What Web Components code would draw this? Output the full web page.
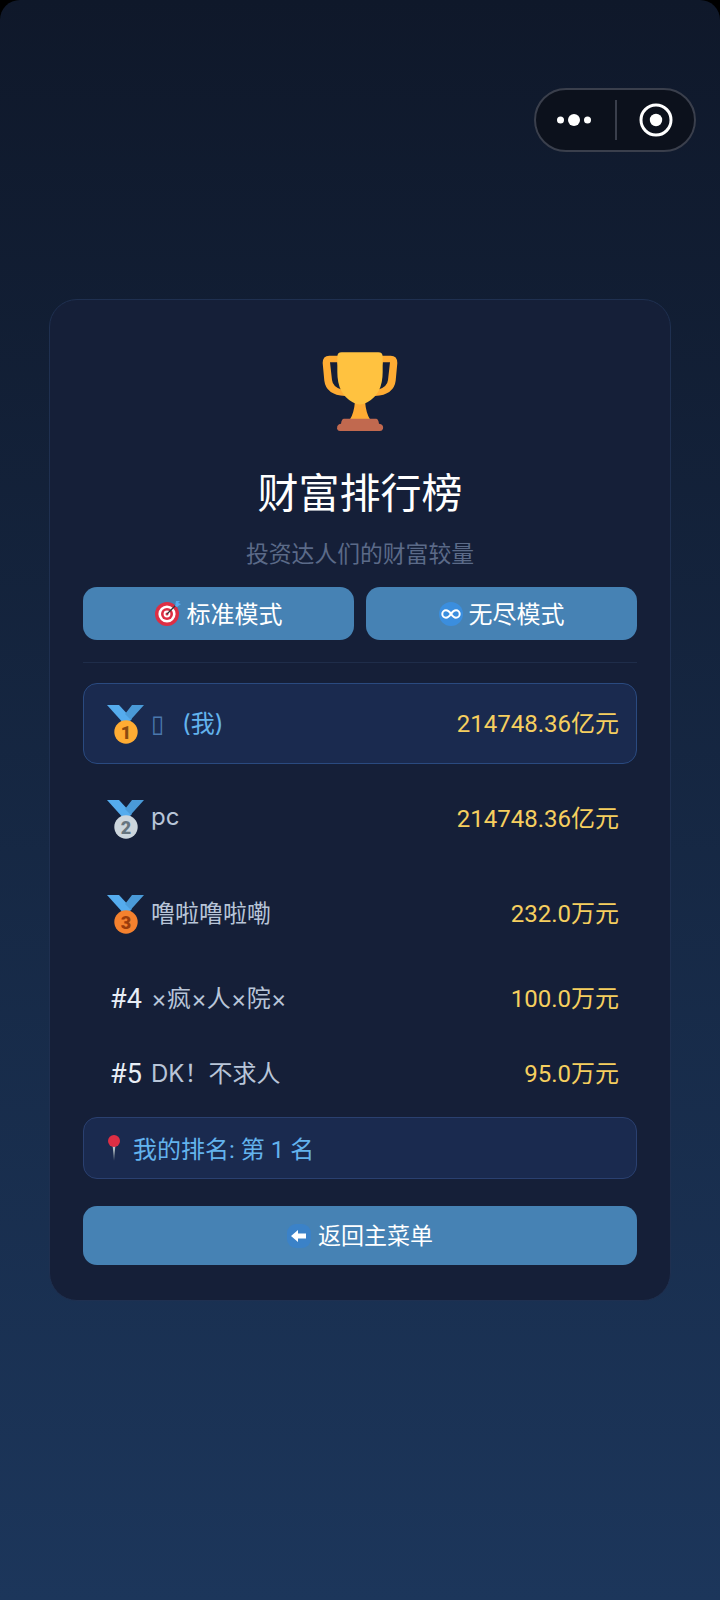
<!DOCTYPE html>
<html lang="zh">
<head>
<meta charset="utf-8">
<title>财富排行榜</title>
<style>
    html, body { margin: 0; padding: 0; background: #000; }
    body { font-family: Roboto, "Noto Sans CJK SC", sans-serif; }
</style>
</head>
<body>

<rank-page>
    <capsule-menu slot="top"></capsule-menu>
    <rank-card title-text="财富排行榜" sub-text="投资达人们的财富较量">
        <mode-button slot="modes" icon="target">标准模式</mode-button>
        <mode-button slot="modes" icon="infinity">无尽模式</mode-button>

        <rank-row slot="rows" mine rank="1" name="▯" tag="(我)" amount="214748.36亿元"></rank-row>
        <rank-row slot="rows" rank="2" name="pc" amount="214748.36亿元"></rank-row>
        <rank-row slot="rows" rank="3" name="噜啦噜啦嘞" amount="232.0万元"></rank-row>
        <rank-row slot="rows" rank="4" name="×疯×人×院×" amount="100.0万元"></rank-row>
        <rank-row slot="rows" rank="5" name="DK！不求人" amount="95.0万元"></rank-row>

        <my-rank slot="mine">我的排名: 第 1 名</my-rank>
        <mode-button slot="back" wide icon="back">返回主菜单</mode-button>
    </rank-card>
</rank-page>

<script>
// emoji are drawn by hand, the sandbox has no emoji font
const ICONS = {
    trophy: `<svg width="80" height="84" viewBox="120 55 240 252">
        <path fill-rule="evenodd" d="M172 75H148Q128 75 128 97L133 150Q138 192 195 196H285Q342 192 347 150L352 97Q352 75 332 75H308Z
            M150 95H172L188 178Q158 170 156 148Z M330 95H308L292 178Q322 170 324 148Z" fill="#ffac33"/>
        <path d="M225 212H255Q258 248 270 266H210Q222 248 225 212Z" fill="#ffac33"/>
        <path d="M172 78Q172 65 185 65H295Q308 65 308 78V125Q308 190 262 215Q240 228 218 215Q172 190 172 125Z" fill="#ffc240"/>
        <path d="M192 264H288Q295 264 297 279L303 281Q311 285 309 294Q307 301 300 301H180Q173 301 171 294Q170 285 177 281L183 279Q185 264 192 264Z" fill="#c1694f"/>
    </svg>`,
    target: `<svg width="26" height="26" viewBox="0 0 26 26">
        <circle cx="12" cy="13" r="12" fill="#dd2e44"/>
        <circle cx="12" cy="13" r="8.6" fill="#fff"/>
        <circle cx="12" cy="13" r="6" fill="#dd2e44"/>
        <circle cx="12" cy="13" r="3.4" fill="#fff"/>
        <circle cx="12" cy="13" r="1.5" fill="#dd2e44"/>
        <path d="M12 13L22 3" stroke="#31373d" stroke-width="1.2"/>
        <path d="M20 5L21 0L25 0L23 2L26 3L22 6Z" fill="#55acee"/>
    </svg>`,
    infinity: `<svg width="24" height="24" viewBox="0 0 24 24">
        <circle cx="12" cy="12" r="12" fill="#3b8ede"/>
        <path d="M12 12C10 9 8.600 8.300 7 8.300A3.700 3.700 0 0 0 7 15.700C8.600 15.700 10 15 12 12C14 9 15.400 8.300 17 8.300A3.700 3.700 0 0 1 17 15.700C15.400 15.700 14 15 12 12Z" fill="none" stroke="#fff" stroke-width="2"/>
    </svg>`,
    back: `<svg width="24" height="24" viewBox="0 0 24 24">
        <rect width="24" height="24" rx="9" fill="#3b82c8"/>
        <path d="M4 12L11 6V9.500H19V14.500H11V18Z" fill="#fff"/>
    </svg>`,
    pin: `<svg width="12" height="26" viewBox="0 0 12 26">
        <defs><linearGradient id="tail" x1="0" y1="0" x2="0" y2="1">
            <stop offset="0" stop-color="#ccd6dd"/><stop offset="1" stop-color="#66757f"/>
        </linearGradient></defs>
        <path d="M4.500 9L6 26L7.500 9Z" fill="url(#tail)"/>
        <circle cx="6" cy="6" r="6" fill="#dd2e44"/>
    </svg>`
};

const MEDAL_COLORS = {
    1: { disc: '#ffac33', num: '#8a4a10' },
    2: { disc: '#ccd6dd', num: '#66757f' },
    3: { disc: '#f4812e', num: '#9a3c0c' }
};

function medalSvg(rank) {
    const c = MEDAL_COLORS[rank];
    return `<svg width="38" height="40" viewBox="0 0 38 40">
        <path d="M0 1H12L25 15L18 21Z" fill="#55acee"/>
        <path d="M37 1H25L18 10L24 16L19 21Z" fill="#4a9ad8"/>
        <circle cx="19" cy="28" r="11.700" fill="${c.disc}"/>
        <text x="19" y="34.500" text-anchor="middle" font-family="Roboto, sans-serif" font-weight="900" font-size="18" fill="${c.num}">${rank}</text>
    </svg>`;
}

class RankPage extends HTMLElement {
    constructor() {
        super();
        const shadow = this.attachShadow({ mode: 'open' });
        shadow.innerHTML = `
            <style>
                :host {
                    display: flex;
                    flex-direction: column;
                    box-sizing: border-box;
                    height: 1600px;
                    padding: 88px 24px 0 49px;
                    border-radius: 20px 20px 0 0;
                    background: linear-gradient(180deg, #0f182a 0%, #1c365b 100%);
                    overflow: hidden;
                }
                .top {
                    display: flex;
                    justify-content: flex-end;
                    height: 64px;
                    margin-bottom: 147px;
                }
                .body { width: 622px; }
            </style>
            <div class="top"><slot name="top"></slot></div>
            <div class="body"><slot></slot></div>
        `;
    }
}

class CapsuleMenu extends HTMLElement {
    constructor() {
        super();
        const shadow = this.attachShadow({ mode: 'open' });
        shadow.innerHTML = `
            <style>
                :host {
                    display: flex;
                    align-items: center;
                    box-sizing: border-box;
                    width: 162px;
                    height: 64px;
                    background: #0c111c;
                    border: 2px solid #3a3f4c;
                    border-radius: 32px;
                }
                .more {
                    box-sizing: border-box;
                    width: 79px;
                    padding-right: 3px;
                    display: flex;
                    justify-content: center;
                }
                .line { width: 2px; height: 40px; background: #3a3f4c; }
                .rec { flex: 1; display: flex; justify-content: center; }
                svg { display: block; }
            </style>
            <div class="more">
                <svg width="34" height="14" viewBox="0 0 34 14">
                    <circle cx="3.500" cy="7" r="3.500" fill="#fff"/>
                    <circle cx="17" cy="7" r="6" fill="#fff"/>
                    <circle cx="30.500" cy="7" r="3.500" fill="#fff"/>
                </svg>
            </div>
            <div class="line"></div>
            <div class="rec">
                <svg width="34" height="34" viewBox="0 0 34 34">
                    <circle cx="17" cy="17" r="15" fill="none" stroke="#fff" stroke-width="3"/>
                    <circle cx="17" cy="17" r="6.200" fill="#fff"/>
                </svg>
            </div>
        `;
    }
}

class RankCard extends HTMLElement {
    constructor() {
        super();
        const shadow = this.attachShadow({ mode: 'open' });
        shadow.innerHTML = `
            <style>
                :host {
                    display: block;
                    box-sizing: border-box;
                    height: 1002px;
                    padding: 49px 33px 0;
                    background: #151f38;
                    border: 1px solid #1f3050;
                    border-radius: 28px;
                }
                .cup { display: flex; justify-content: center; }
                .cup svg { display: block; }
                h1 {
                    margin: 33px 0 0;
                    font-size: 41px;
                    font-weight: 400;
                    line-height: 56px;
                    text-align: center;
                    color: #fff;
                }
                p {
                    margin: 15px 0 0;
                    font-size: 22.800px;
                    line-height: 36px;
                    text-align: center;
                    color: #5b6a88;
                }
                .modes {
                    display: grid;
                    grid-template-columns: 1fr 1fr;
                    gap: 12px;
                    margin-top: 14px;
                }
                hr {
                    height: 1px;
                    margin: 22px 0 20px;
                    border: 0;
                    background: #1f2d4a;
                }
                .rows {
                    display: flex;
                    flex-direction: column;
                    gap: 14px;
                }
                .mine { display: block; margin-top: 13px; }
                .back { display: block; margin-top: 27px; }
            </style>
            <div class="cup"></div>
            <h1></h1>
            <p></p>
            <div class="modes"><slot name="modes"></slot></div>
            <hr>
            <div class="rows"><slot name="rows"></slot></div>
            <div class="mine"><slot name="mine"></slot></div>
            <div class="back"><slot name="back"></slot></div>
        `;
        shadow.querySelector('.cup').innerHTML = ICONS.trophy;
        this.heading = shadow.querySelector('h1');
        this.sub = shadow.querySelector('p');
    }

    connectedCallback() {
        this.heading.textContent = this.getAttribute('title-text') || '';
        this.sub.textContent = this.getAttribute('sub-text') || '';
    }
}

class ModeButton extends HTMLElement {
    constructor() {
        super();
        const shadow = this.attachShadow({ mode: 'open' });
        shadow.innerHTML = `
            <style>
                :host {
                    display: flex;
                    align-items: center;
                    justify-content: center;
                    gap: 6px;
                    height: 53px;
                    background: #4682b4;
                    border-radius: 14px;
                    color: #fff;
                    font-size: 24px;
                }
                :host([wide]) { height: 59px; font-size: 23px; gap: 7px; }
                .icon { display: flex; }
                .label { padding-bottom: 3px; }
                svg { display: block; }
            </style>
            <span class="icon"></span>
            <span class="label"><slot></slot></span>
        `;
        this.icon = shadow.querySelector('.icon');
    }

    connectedCallback() {
        this.icon.innerHTML = ICONS[this.getAttribute('icon')] || '';
    }
}

class RankRow extends HTMLElement {
    constructor() {
        super();
        const shadow = this.attachShadow({ mode: 'open' });
        shadow.innerHTML = `
            <style>
                :host {
                    display: flex;
                    align-items: center;
                    box-sizing: border-box;
                    height: 61px;
                    padding: 0 17px 0 23px;
                    border: 1px solid transparent;
                    border-radius: 14px;
                    font-size: 24px;
                    color: #b8c5d8;
                }
                :host([medal]) { height: 81px; }
                :host([mine]) {
                    background: #1a2a4f;
                    border-color: #2a4a80;
                }
                .rank {
                    width: 38px;
                    margin-right: 6px;
                    display: flex;
                    justify-content: center;
                    font-size: 27px;
                    color: #e8eef6;
                }
                .name {
                    flex: 1;
                    padding-bottom: 4px;
                    white-space: pre;
                    font-family: Inter, "Noto Sans CJK SC", sans-serif;
                }
                .tag { margin-left: 18px; color: #63b3ed; }
                :host([mine]) .name { color: #4a78ad; }
                .amount { padding-bottom: 4px; color: #f6cf5f; }
                svg { display: block; }
            </style>
            <span class="rank"></span>
            <span class="name"></span>
            <span class="amount"></span>
        `;
        this.rankEl = shadow.querySelector('.rank');
        this.nameEl = shadow.querySelector('.name');
        this.amountEl = shadow.querySelector('.amount');
    }

    connectedCallback() {
        const rank = Number(this.getAttribute('rank'));
        if (rank <= 3) {
            this.setAttribute('medal', '');
            this.rankEl.innerHTML = medalSvg(rank);
        } else {
            this.rankEl.textContent = '#' + rank;
        }
        this.nameEl.textContent = this.getAttribute('name') || '';
        const tag = this.getAttribute('tag');
        if (tag) {
            const span = document.createElement('span');
            span.className = 'tag';
            span.textContent = tag;
            this.nameEl.appendChild(span);
        }
        this.amountEl.textContent = this.getAttribute('amount') || '';
    }
}

class MyRank extends HTMLElement {
    constructor() {
        super();
        const shadow = this.attachShadow({ mode: 'open' });
        shadow.innerHTML = `
            <style>
                :host {
                    display: flex;
                    align-items: center;
                    gap: 13px;
                    box-sizing: border-box;
                    height: 62px;
                    padding: 0 0 0 24px;
                    background: #1a2a4f;
                    border: 1px solid #2a4070;
                    border-radius: 14px;
                    color: #63b3ed;
                    font-size: 24px;
                }
                .label { padding-bottom: 2px; }
                svg { display: block; }
            </style>
            <span class="pin"></span>
            <span class="label"><slot></slot></span>
        `;
        shadow.querySelector('.pin').innerHTML = ICONS.pin;
    }
}

customElements.define('rank-page', RankPage);
customElements.define('capsule-menu', CapsuleMenu);
customElements.define('rank-card', RankCard);
customElements.define('mode-button', ModeButton);
customElements.define('rank-row', RankRow);
customElements.define('my-rank', MyRank);
</script>
</body>
</html>
